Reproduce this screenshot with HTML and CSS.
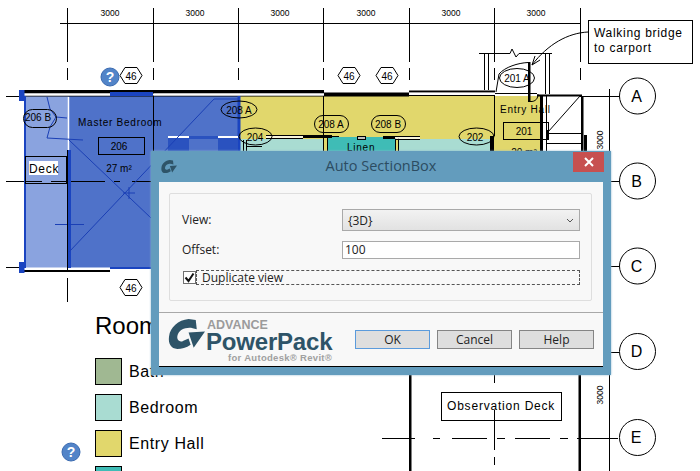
FILE: index.html
```html
<!DOCTYPE html>
<html lang="en">
<head>
<meta charset="utf-8">
<title>Auto SectionBox</title>
<link rel="stylesheet" href="styles.css">
</head>
<body>
<main class="canvas">
<svg class="plan" width="700" height="471" viewBox="0 0 700 471" xmlns="http://www.w3.org/2000/svg">
  <!-- room fills -->
  <rect class="f-deck" x="25" y="96" width="44" height="172"/>
  <rect class="f-master" x="69" y="96" width="171" height="172"/>
  <rect class="f-hall" x="240" y="96" width="300" height="60"/>
  <rect class="f-bed" x="240" y="139" width="84" height="20"/>
  <rect class="f-linen" x="328" y="137" width="67" height="20"/>
  <rect class="f-bed" x="398" y="139" width="92" height="20"/>
  <rect class="f-white" x="543" y="97" width="38" height="60"/>

  <!-- gridlines -->
  <g class="ln">
    <path d="M60 23.500H581"/>
    <path d="M67.500 8V62M153.500 8V62M238.500 8V62M323.500 8V62M409.500 8V62M494.500 8V62M580.500 8V62"/>
    <path d="M67.500 68V80M153.500 68V80M238.500 68V80M323.500 68V80M409.500 68V80M494.500 68V80M580.500 68V80"/>
    <path d="M153.500 90V136M323.500 96V136M494.500 96V136M238.500 96V136"/>
    <path d="M67.500 278V302"/>
    <path d="M6 96.500H24M6 181.500H42M51 181.500H105M114 181.500H120M132 181.500H151M6 267.500H24"/>
    <path d="M580 96.500H619M611 181.500H619M611 266.500H619M611 352.500H619M609.500 89V471"/>
    <path d="M382 438.500H415M433 438.500H440M452 438.500H487M497 438.500H505M515 438.500H550M560 438.500H568M577 438.500H618"/>
    <path d="M494.500 375V383M494.500 410V450M494.500 457V465"/>
  </g>

  <!-- walls -->
  <g class="wall">
    <rect x="24" y="90" width="300" height="3.500"/>
    <rect x="324" y="92.500" width="85" height="4"/>
    <rect x="409" y="90.500" width="86" height="2"/>
    <rect x="409" y="95" width="86" height="1"/>
    <rect x="24" y="95.500" width="300" height="1"/>
    <rect x="528" y="62" width="2.500" height="40"/>
    <rect x="537" y="94.500" width="45" height="2"/>
    <rect x="540" y="96" width="3" height="60"/>
    <rect x="546" y="96" width="1" height="60"/>
    <rect x="547" y="130" width="2" height="10"/>
    <rect x="547" y="143" width="35" height="1"/>
    <rect x="581" y="96" width="2.500" height="60"/>
    <rect x="584" y="135" width="3" height="20"/>
    <rect x="20" y="270" width="90" height="2"/>
    <rect x="323" y="137" width="1" height="16"/>
    <rect x="327" y="137" width="1" height="16"/>
    <rect x="395" y="138" width="1" height="16"/>
    <rect x="398" y="138" width="1" height="16"/>
    <rect x="490" y="136" width="4" height="20"/>
    <rect x="409" y="374" width="2.500" height="97"/>
    <rect x="578.500" y="374" width="2.500" height="97"/>
    <rect x="266" y="135" width="37" height="1"/>
    <rect x="266" y="138" width="37" height="1"/>
    <rect x="303" y="135" width="29" height="3"/>
    <rect x="332" y="136" width="7" height="1"/>
    <rect x="383" y="136" width="12" height="3"/>
    <rect x="395" y="136" width="25" height="1"/>
    <rect x="395" y="139" width="25" height="1"/>
    <rect x="357" y="136" width="9" height="4"/>
    <rect x="243" y="140" width="1" height="12"/>
    <rect x="246" y="140" width="1" height="12"/>
    <rect x="246" y="146" width="16" height="1"/>
  </g>
  <path class="ln-white" d="M24 94.500H324M409 93.800H495M25 268.500H110"/>
  <path class="ln-white-thin" d="M266 137H303M395 138H420M358 138H365M68.500 97V150"/>

  <!-- blue selection -->
  <g class="blue-fill">
    <rect x="110" y="92" width="43" height="4"/>
    <rect x="19" y="90" width="5.500" height="11"/>
    <rect x="19" y="262" width="5.500" height="11"/>
    <rect x="68" y="150" width="3" height="118"/>
    <rect x="237.500" y="96" width="3" height="56"/>
    <rect x="24" y="96" width="2" height="172"/>
    <rect x="110" y="267" width="41" height="2"/>
  </g>
  <rect class="blue-win" x="168" y="138" width="21" height="14"/>
  <rect class="blue-win" x="189" y="136" width="29" height="3"/>
  <rect class="blue-win" x="218" y="138" width="20" height="14"/>
  <path class="ln-white" d="M168 137H189M218 137H238"/>
  <g class="blue-ln">
    <path d="M47 97L50 109 56 117 67 118M56 117L50 127 47 138 83 140M69 140L151 218M214 99H239M214 99L69 252"/>
    <path d="M55 224.500H84M123 193H135M129 187V199"/>
  </g>
  <path class="ln" d="M67.500 150V270M153.500 136V151M323.500 139V152"/>

  <!-- bridge, door and callout leaders -->
  <g class="ln">
    <path d="M479 53.500H510L512 49 516 57 519 53.500H552"/>
    <path d="M484.500 54V90M488.500 54V90M545.500 54V94M549.500 54V94"/>
    <path d="M495 93.500H537M496 92L499 74C505 67 518 63 528 62.500"/>
    <path d="M530 101.500C536 102 538 98 538 94"/>
    <path d="M580 96L548 132"/>
    <path d="M547 133.500H582M588 32C568 33 548 44 532 65"/>
    <path d="M532 65L535 56M532 65L540 60"/>
  </g>

  <!-- legend swatches -->
  <rect class="sw sw-bath" x="95.500" y="358.500" width="26" height="26"/>
  <rect class="sw sw-bed" x="95.500" y="394.500" width="26" height="26"/>
  <rect class="sw sw-hall" x="95.500" y="430.500" width="26" height="26"/>
  <rect class="sw sw-linen" x="95.500" y="466.500" width="26" height="26"/>

  <!-- annotation shapes -->
  <g class="shape">
    <path d="M120 75.500L125 67.500H137L142 75.500 137 83.500H125Z"/>
    <path d="M338 75.500L343 67.500H355L360 75.500 355 83.500H343Z"/>
    <path d="M376 75.500L381 67.500H393L398 75.500 393 83.500H381Z"/>
    <path d="M120 287.500L125 279.500H137L142 287.500 137 295.500H125Z"/>
    <rect x="23.500" y="109.500" width="33" height="18" rx="9" class="noFill"/>
    <rect x="314.500" y="115.500" width="34" height="17" rx="8.500" class="noFill"/>
    <rect x="371.500" y="115.500" width="34" height="17" rx="8.500" class="noFill"/>
    <ellipse cx="239" cy="109.500" rx="18" ry="8.500" class="noFill"/>
    <ellipse cx="255.500" cy="136.500" rx="16.500" ry="8.500" class="noFill"/>
    <ellipse cx="476.500" cy="136.500" rx="17.500" ry="8.500" class="noFill"/>
    <ellipse cx="517" cy="78" rx="17.500" ry="9.500" class="noFill"/>
    <rect x="98.500" y="137.500" width="46" height="17" class="noFill"/>
    <rect x="503.500" y="122.500" width="45" height="17" class="noFill"/>
    <rect x="25.500" y="156.500" width="41" height="27" class="noFill"/>
    <rect x="588.500" y="20.500" width="104" height="43"/>
    <rect x="441.500" y="392.500" width="120" height="28" class="noFill"/>
    <circle cx="637.500" cy="96" r="18"/>
    <circle cx="637.500" cy="181" r="18"/>
    <circle cx="637.500" cy="266" r="18"/>
    <circle cx="637.500" cy="351.500" r="18"/>
    <circle cx="637.500" cy="437.500" r="18"/>
  </g>
  <rect class="f-white" x="29" y="161" width="29" height="14"/>

  <!-- help markers -->
  <circle class="help" cx="110" cy="77" r="9"/>
  <circle class="help" cx="71" cy="452" r="9"/>
  <text class="t-help" x="110" y="82">?</text>
  <text class="t-help" x="71" y="457">?</text>

  <!-- text -->
  <g class="t-dim">
    <text x="110" y="16">3000</text><text x="195" y="16">3000</text><text x="280" y="16">3000</text>
    <text x="366" y="16">3000</text><text x="451" y="16">3000</text><text x="536" y="16">3000</text>
    <text transform="translate(603 140) rotate(-90)">3000</text>
    <text transform="translate(603 395) rotate(-90)">3000</text>
  </g>
  <g class="t-tag">
    <text x="131" y="79.500">46</text><text x="349" y="79.500">46</text><text x="387" y="79.500">46</text><text x="131" y="291.500">46</text>
    <text x="38" y="121">206 B</text><text x="239" y="113.500">208 A</text><text x="331" y="127.500">208 A</text>
    <text x="388" y="127.500">208 B</text><text x="255" y="140.500">204</text><text x="475" y="140.500">202</text><text x="517" y="82">201 A</text>
    <text x="119" y="149.500">206</text><text x="524" y="134.500">201</text><text x="119" y="172">27 m²</text><text x="524" y="156">20 m²</text>
  </g>
  <g class="t-label">
    <text x="78" y="126">Master Bedroom</text>
    <text x="500" y="113">Entry Hall</text>
    <text x="347" y="151">Linen</text>
  </g>
  <g class="t-note">
    <text x="594" y="37">Walking bridge</text>
    <text x="594" y="52">to carport</text>
    <text x="447" y="410" class="t-obs">Observation Deck</text>
    <text x="29" y="173">Deck</text>
  </g>
  <g class="t-grid">
    <text x="636.500" y="101.500">A</text><text x="636.500" y="186.500">B</text><text x="636.500" y="271.500">C</text><text x="636.500" y="357">D</text><text x="636" y="443">E</text>
  </g>
  <text class="t-title" x="95" y="334">Room</text>
  <g class="t-legend">
    <text x="129" y="377">Bath</text>
    <text x="129" y="413">Bedroom</text>
    <text x="129" y="449">Entry Hall</text>
  </g>
</svg>

<section class="dialog">
  <header class="titlebar">
    <svg class="app-icon" width="16" height="14" viewBox="0 0 36 31"><path class="logo-mark" d="M27 1L28 10C23 8 20 8 17 9 12 10 9 14 9 18 9 21 12 23 15 21L20 19 22 25C18 28 13 29 9 29 3 29 0 24 1 17 2 8 10 1 20 0ZM20 13L36 12 25 28Z"/></svg>
    <h1 class="title">Auto SectionBox</h1>
    <button class="close" type="button" aria-label="Close">
      <svg width="10" height="10" viewBox="0 0 10 10"><path class="close-x" d="M1 1L9 9M9 1L1 9"/></svg>
    </button>
  </header>
  <div class="client">
    <div class="body-area">
      <div class="group">
        <div class="field-row">
          <label class="field-label">View:</label>
          <div class="combo"><span>{3D}</span>
            <svg width="8" height="5" viewBox="0 0 8 5"><path class="chev" d="M1 1L4 4 7 1"/></svg>
          </div>
        </div>
        <div class="field-row">
          <label class="field-label">Offset:</label>
          <div class="input">100</div>
        </div>
        <div class="check-row">
          <span class="checkbox">
            <svg width="13" height="13" viewBox="0 0 13 13"><path class="tick" d="M2.500 6.500L5.500 10 10.500 2.500"/></svg>
          </span>
          <span class="check-label">Duplicate view</span>
        </div>
      </div>
    </div>
    <footer class="footer">
      <div class="logo">
        <svg class="logo-g" width="37" height="32" viewBox="0 0 36 31"><path class="logo-mark" d="M27 1L28 10C23 8 20 8 17 9 12 10 9 14 9 18 9 21 12 23 15 21L20 19 22 25C18 28 13 29 9 29 3 29 0 24 1 17 2 8 10 1 20 0ZM20 13L36 12 25 28Z"/></svg>
        <div class="logo-text">
          <span class="logo-adv">ADVANCE</span>
          <span class="logo-pp">PowerPack</span>
          <span class="logo-for">for Autodesk® Revit®</span>
        </div>
      </div>
      <div class="buttons">
        <button class="btn btn-default" type="button">OK</button>
        <button class="btn" type="button">Cancel</button>
        <button class="btn" type="button">Help</button>
      </div>
    </footer>
  </div>
</section>
</main>
</body>
</html>
```
FILE: styles.css
```css
* { box-sizing: border-box; }
html, body { margin: 0; padding: 0; background: #fff; }
.canvas { position: relative; width: 700px; height: 471px; overflow: hidden; background: #fff; }
.plan { display: block; }

/* plan fills */
.f-deck { fill: #8aa3df; }
.f-master { fill: #4f72c9; }
.f-hall { fill: #e1d76c; }
.f-bed { fill: #a9dcd2; }
.f-linen { fill: #3fbcb6; }
.f-white { fill: #fff; }
.ln { fill: none; stroke: #000; stroke-width: 1; }
.wall { fill: #000; }
.ln-white { fill: none; stroke: #fff; stroke-width: 2; }
.ln-white-thin { fill: none; stroke: #fff; stroke-width: 1.500; }
.blue-fill { fill: #1a44c0; }
.blue-win { fill: #2a52bf; }
.blue-ln { fill: none; stroke: #1a3fb5; stroke-width: 1; }
.sw { stroke: #000; stroke-width: 1; }
.sw-bath { fill: #a0b892; }
.sw-bed { fill: #a9dcd2; }
.sw-hall { fill: #e1d76c; }
.sw-linen { fill: #3fbcb6; }
.shape { fill: #fff; stroke: #000; stroke-width: 1; }
.shape .noFill { fill: none; }
.help { fill: #5284c8; stroke: #3a6ab0; stroke-width: 1; }

/* plan text */
.plan text { font-family: "Liberation Sans", Arial, sans-serif; fill: #000; }
.plan .t-help { font-size: 14px; font-weight: 700; text-anchor: middle; fill: #fff; }
.t-dim text { font-size: 8.500px; text-anchor: middle; }
.t-tag text { font-size: 10px; text-anchor: middle; }
.t-label text { font-size: 10px; letter-spacing: 0.750px; }
.t-note text { font-size: 12px; letter-spacing: 0.700px; }
.t-note .t-obs { letter-spacing: 0.800px; }
.t-grid text { font-size: 16px; text-anchor: middle; }
.t-title { font-size: 24px; }
.t-legend text { font-size: 16px; letter-spacing: 0.600px; }

/* dialog */
.dialog {
  position: absolute; left: 151px; top: 151px; width: 460px; height: 224px;
  display: flex; flex-direction: column;
  background: #639cbd; padding: 0 8px 8px;
  font-family: "Open Sans", "Noto Sans", sans-serif; font-size: 12px; color: #222;
  box-shadow: 0 0 2px #8fb8d0;
}
.titlebar { position: relative; height: 31px; flex: none; display: flex; align-items: center; justify-content: center; padding-bottom: 2px; }
.app-icon { position: absolute; left: 2px; top: 9px; }
.title { margin: 0; font-size: 14.500px; font-weight: 400; color: #2c4c62; }
.close {
  position: absolute; right: -1px; top: 1px; width: 31px; height: 20px; padding: 0; border: 0;
  background: #c75050; display: flex; align-items: center; justify-content: center;
}
.close-x { fill: none; stroke: #fff; stroke-width: 2; }
.client {
  flex: 1; display: flex; flex-direction: column; background: #f8f8f8;
  border-bottom: 1px solid #000; min-height: 0;
}
.body-area { flex: none; height: 131px; padding: 11px 11px 0 10px; border-bottom: 1px solid #a8a8a8; }
.group {
  height: 108px; border: 1px solid #dedede; border-radius: 2px;
  padding: 15px 11px 0 12px; display: flex; flex-direction: column;
}
.field-row { display: flex; align-items: center; height: 22px; margin-bottom: 10px; }
.field-row + .field-row { height: 18px; margin-bottom: 11px; }
.field-label { width: 160px; flex: none; position: relative; top: -1px; }
.combo {
  width: 238px; height: 100%; display: flex; align-items: center; justify-content: space-between;
  padding: 0 5px 0 5px; border: 1px solid #a9a9a9;
  background: linear-gradient(#f2f2f2, #e2e2e2);
}
.chev { fill: none; stroke: #555; stroke-width: 1; }
.input {
  width: 238px; height: 100%; padding: 0 2px; line-height: 16px; background: #fff; border: 1px solid #a9a9a9;
}
.check-row { display: flex; align-items: center; height: 15px; margin-left: 1px; }
.checkbox {
  flex: none; width: 13px; height: 13px; display: flex; background: #fff; border: 1px solid #707070;
}
.checkbox svg { margin: -1px; }
.tick { fill: none; stroke: #111; stroke-width: 2; }
.check-label {
  flex: none; width: 384px; height: 15px; line-height: 13px; padding-left: 5px; border: 1px dashed #555;
}
.footer { flex: 1; display: flex; align-items: flex-start; justify-content: space-between; padding: 17px 9px 0 9px; min-height: 0; }
.logo { display: flex; align-items: flex-start; margin-top: -11px; }
.logo-mark { fill: #2e5468; }
.logo-text { display: flex; flex-direction: column; margin-left: 1px; font-family: "Liberation Sans", Arial, sans-serif; font-weight: 700; margin-top: -1px; }
.logo-adv { font-size: 12.500px; line-height: 14px; color: #9b9b9b; margin-left: 1px; }
.logo-pp { font-size: 24px; line-height: 20px; height: 20px; color: #2e5468; letter-spacing: -0.200px; }
.logo-for { font-size: 9.500px; line-height: 11px; color: #a0a0a0; margin-left: 22px; letter-spacing: 0.300px; }
.buttons { display: flex; gap: 7px; }
.btn {
  width: 75px; height: 19px; padding: 0; background: #dedede; border: 1px solid #858585;
  font: inherit; color: #222; line-height: 15px;
}
.btn-default { border-color: #5b9bdc; }
```
